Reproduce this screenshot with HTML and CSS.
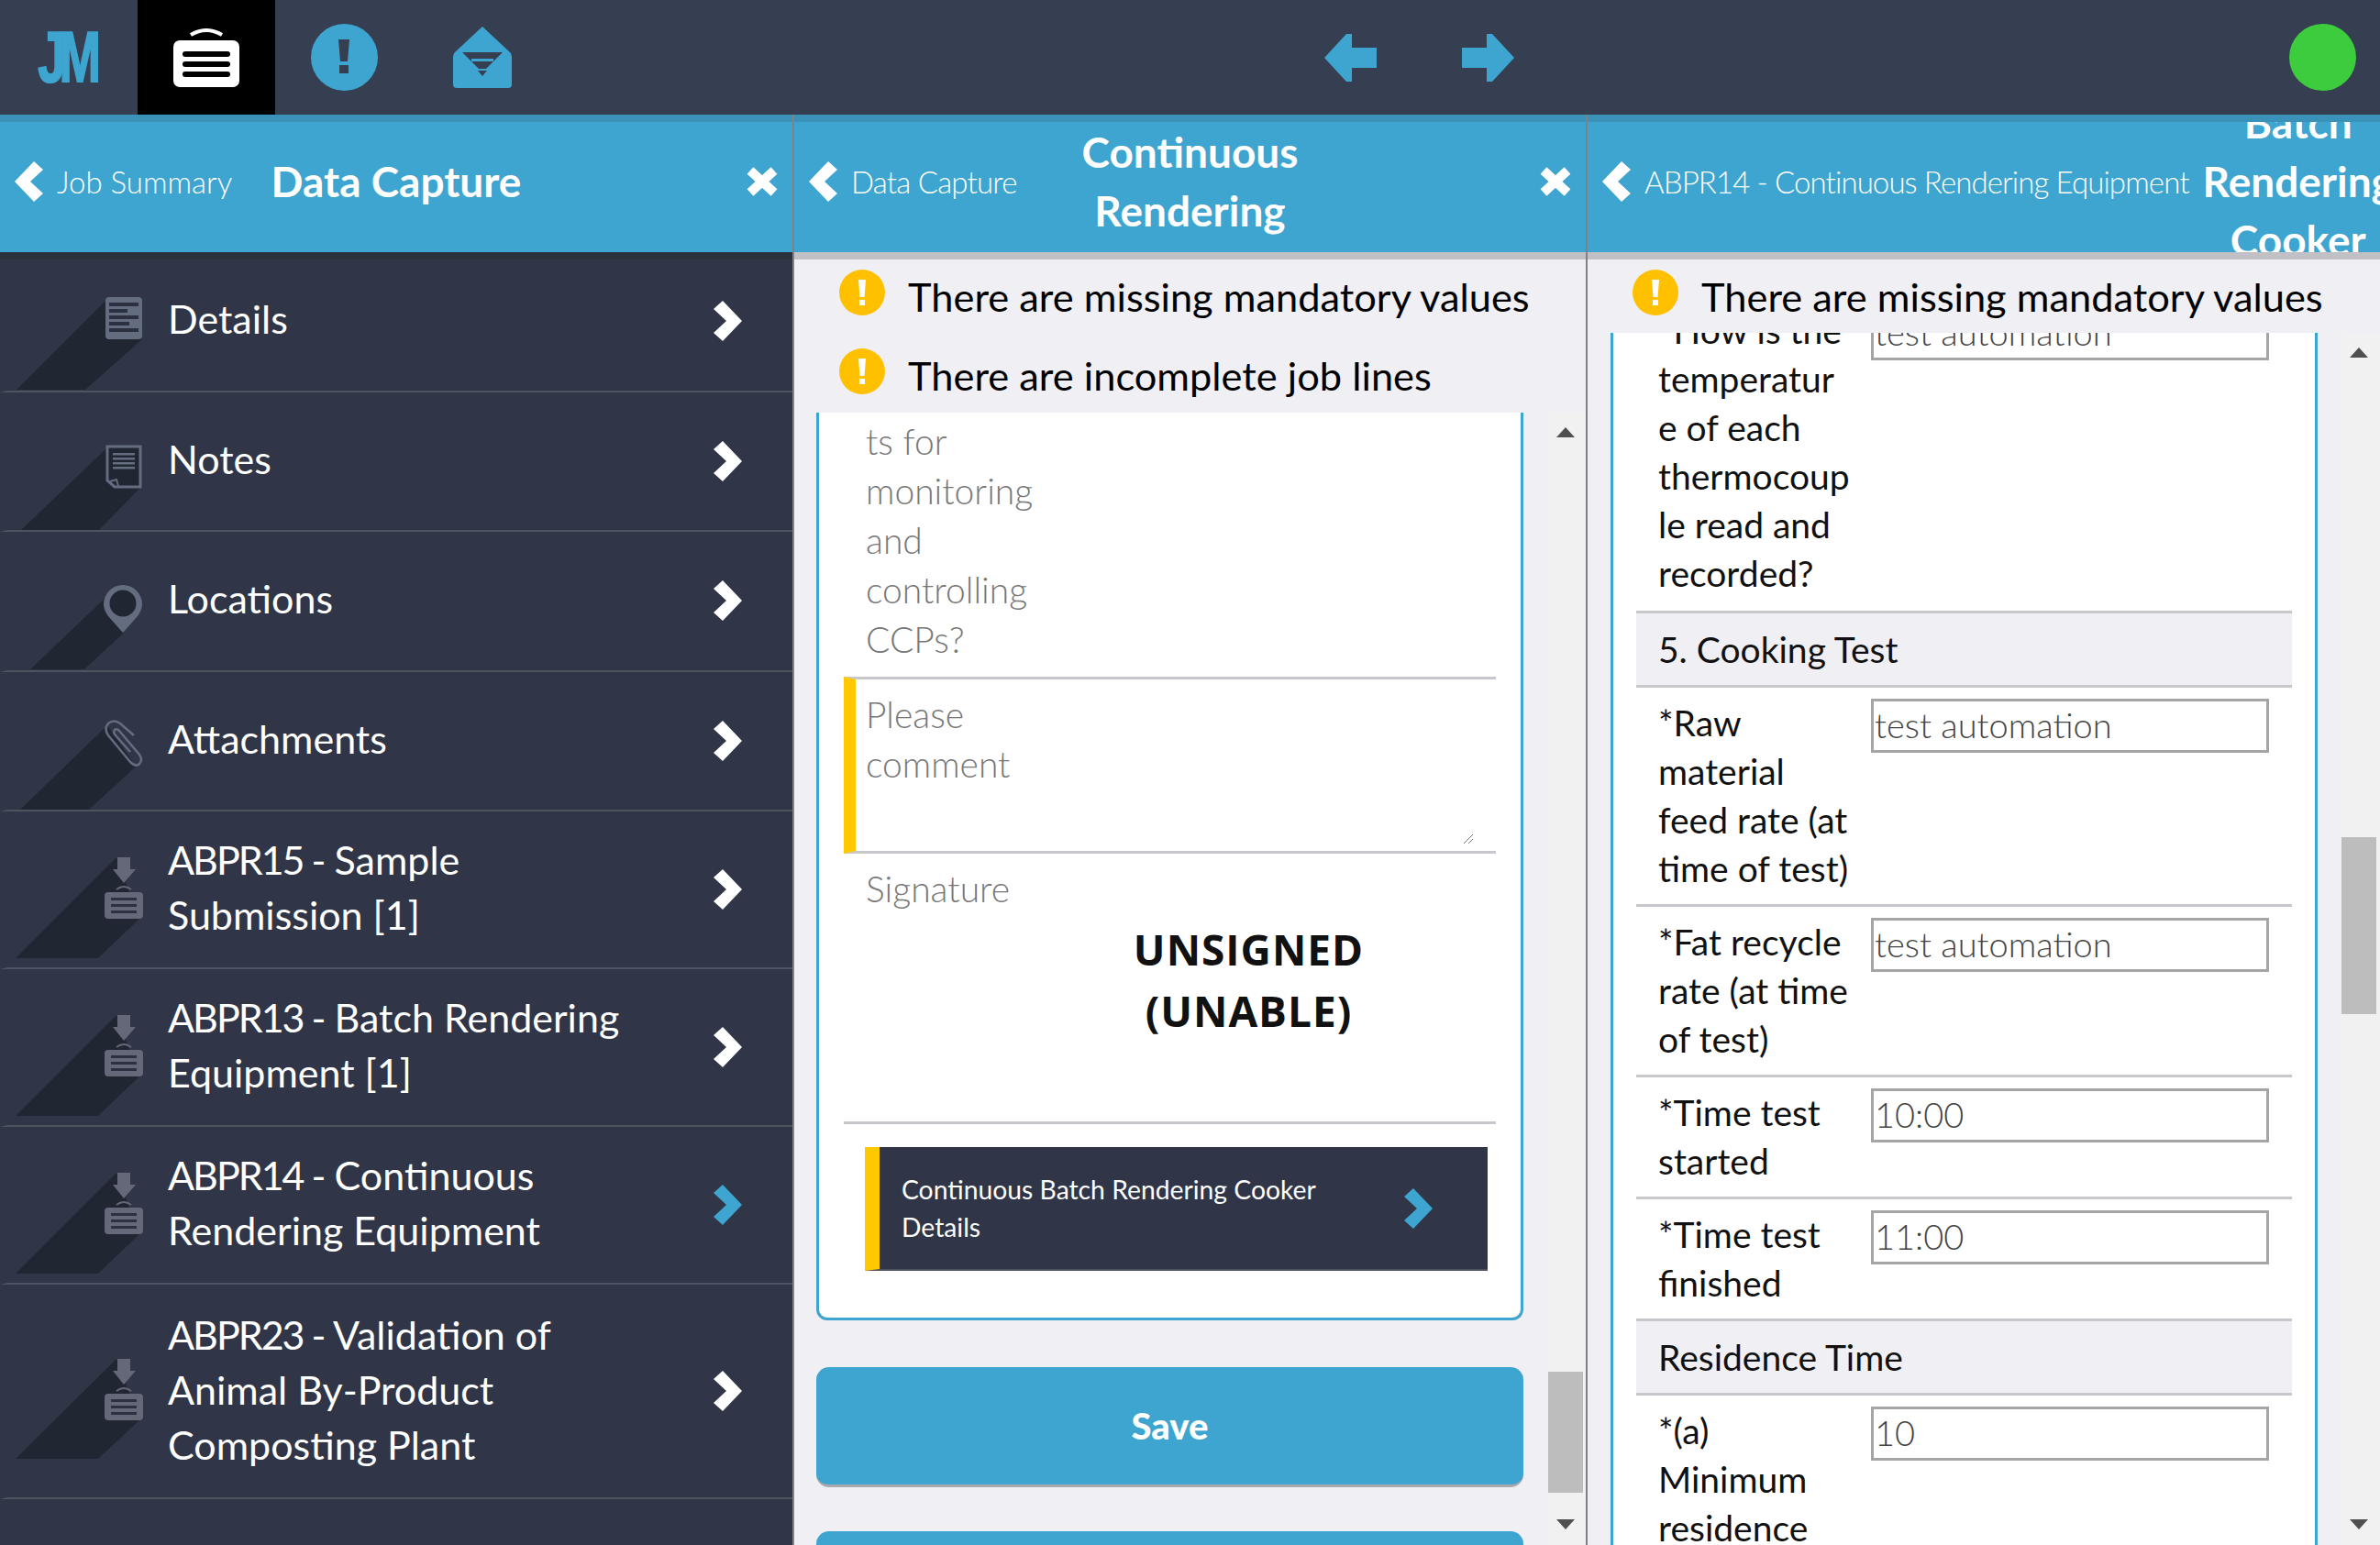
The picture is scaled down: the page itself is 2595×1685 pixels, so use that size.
FILE: index.html
```html
<!DOCTYPE html>
<html lang="en">
<head>
    <meta charset="UTF-8">
    <title>Data Capture</title>
    <link rel="stylesheet" href="styles.css">
</head>
<body>
    <!-- shared icons -->
    <svg class="sprite">
        <symbol id="chev-left" viewBox="0 0 31 44"><polygon points="0,22 21,0 31,9 17,22 31,35 21,44"/></symbol>
        <symbol id="chev-right" viewBox="0 0 31 44"><polygon points="31,22 10,0 0,9 14,22 0,35 10,44"/></symbol>
        <symbol id="close" viewBox="0 0 38 34"><path d="M6 5 L32 29 M32 5 L6 29" stroke="#fff" stroke-width="10" fill="none"/></symbol>
        <symbol id="warn" viewBox="0 0 50 50">
            <circle cx="25" cy="25" r="25" fill="#ffc000"/>
            <polygon points="21,11 29,11 27.5,30 22.5,30" fill="#fff"/>
            <rect x="22" y="33" width="6" height="6" fill="#fff"/>
        </symbol>
        <symbol id="job-dl" viewBox="110 45 50 75">
            <polygon points="128,50 142,50 142,63 148,63 135,78 123,63 128,63" fill="#646878"/>
            <path d="M127 85 Q135 79 143 85" stroke="#646878" stroke-width="2" fill="none"/>
            <rect x="114" y="88" width="42" height="29" rx="4" fill="#646878"/>
            <rect x="121" y="94" width="28" height="3" fill="#2b3140"/>
            <rect x="121" y="101" width="28" height="3" fill="#2b3140"/>
            <rect x="121" y="108" width="28" height="3" fill="#2b3140"/>
        </symbol>
    </svg>

    <header class="topbar">
        <div class="top-btn"><span class="top-logo">JM</span></div>
        <div class="top-btn top-active">
            <svg width="72" height="64" viewBox="0 0 72 64">
                <path d="M19 7 Q36 -3 53 7" stroke="#fff" stroke-width="4" fill="none"/>
                <rect x="0" y="13" width="72" height="51" rx="7" fill="#fff"/>
                <rect x="10" y="25" width="52" height="6" rx="3" fill="#000"/>
                <rect x="10" y="36" width="52" height="6" rx="3" fill="#000"/>
                <rect x="10" y="47" width="52" height="6" rx="3" fill="#000"/>
            </svg>
        </div>
        <div class="top-btn">
            <svg width="73" height="73" viewBox="0 0 73 73">
                <circle cx="36.5" cy="36.5" r="36.5" fill="#3ea5d0"/>
                <polygon points="30,17 42,17 40,41 32,41" fill="#363f52"/>
                <rect x="31" y="45" width="10" height="9" fill="#363f52"/>
            </svg>
        </div>
        <div class="top-btn">
            <svg class="top-mail" width="64" height="67" viewBox="0 0 64 67">
                <path d="M32 0 L62 28 Q64 30 64 33 V63 Q64 67 60 67 H4 Q0 67 0 63 V33 Q0 30 2 28 Z" fill="#3ea5d0"/>
                <path d="M10 28 H54 L36 46 H28 Z" fill="#363f52"/>
                <rect x="20" y="35" width="24" height="3" fill="#3ea5d0"/>
                <polygon points="27,48 37,48 32,54" fill="#363f52"/>
            </svg>
        </div>
        <div class="top-btn top-prev">
            <svg width="57" height="52" viewBox="0 0 57 52"><path d="M0 26 L24 0 H30 V15 H57 V37 H30 V52 H24 Z" fill="#3ea5d0"/></svg>
        </div>
        <div class="top-btn">
            <svg width="57" height="52" viewBox="0 0 57 52"><path d="M57 26 L33 0 H27 V15 H0 V37 H27 V52 H33 Z" fill="#3ea5d0"/></svg>
        </div>
        <div class="status-dot"></div>
    </header>

    <main class="panels">
        <!-- job menu -->
        <section class="panel panel-menu">
            <div class="nav">
                <div class="nav-back"><svg class="chev"><use href="#chev-left"/></svg><span>Job Summary</span></div>
                <div class="nav-title">Data Capture</div>
                <svg class="nav-close"><use href="#close"/></svg>
            </div>
            <ul class="menu">
                <li class="menu-row">
                    <svg class="menu-art" viewBox="8 0 175 150">
                        <polygon class="cast" points="115,53 18,150 93,150 155,95"/>
                        <rect class="ico" x="115" y="49" width="40" height="46" rx="4"/>
                        <g class="ico-cut">
                            <rect x="119" y="55" width="32" height="4"/><rect x="119" y="62" width="20" height="4"/>
                            <rect x="119" y="69" width="32" height="4"/><rect x="119" y="76" width="22" height="4"/>
                            <rect x="119" y="83" width="32" height="4"/>
                        </g>
                    </svg>
                    <span class="menu-label">Details</span>
                    <svg class="menu-chev"><use href="#chev-right"/></svg>
                </li>
                <li class="menu-row">
                    <svg class="menu-art" viewBox="8 0 175 150">
                        <polygon class="cast" points="115,62 23,150 108,150 152,105"/>
                        <path d="M117 59 H153 V103 H125 L117 96 Z" fill="#202632" stroke="#646c80" stroke-width="3"/>
                        <path d="M120 97 L127 95 L129 102" fill="none" stroke="#646c80" stroke-width="2"/>
                        <g class="ico"><rect x="123" y="66" width="24" height="2.5"/><rect x="123" y="71" width="24" height="2.5"/><rect x="123" y="76" width="24" height="2.5"/><rect x="123" y="81" width="24" height="2.5"/></g>
                    </svg>
                    <span class="menu-label">Notes</span>
                    <svg class="menu-chev"><use href="#chev-right"/></svg>
                </li>
                <li class="menu-row">
                    <svg class="menu-art" viewBox="8 0 175 150">
                        <polygon class="cast" points="117,70 33,150 92,150 135,110"/>
                        <path class="ico" d="M134 110 L118 92 Q113 85 113 79 A21 21 0 0 1 155 79 Q155 85 150 92 Z"/>
                        <circle cx="134" cy="78" r="14.5" fill="#202632"/>
                    </svg>
                    <span class="menu-label">Locations</span>
                    <svg class="menu-chev"><use href="#chev-right"/></svg>
                </li>
                <li class="menu-row">
                    <svg class="menu-art" viewBox="8 0 175 150">
                        <polygon class="cast" points="117,58 22,150 97,150 148,103"/>
                        <path d="M146 69 L131 56 Q124 51 118 56 Q113 62 118 69 L142 98 Q148 104 152 100 Q156 96 152 90 L130 64 Q127 61 125 63 Q123 66 126 69 L142 87" fill="none" stroke="#646c80" stroke-width="2.5"/>
                    </svg>
                    <span class="menu-label">Attachments</span>
                    <svg class="menu-chev"><use href="#chev-right"/></svg>
                </li>
                <li class="menu-row">
                    <svg class="menu-art" viewBox="8 0 175 170">
                        <polygon class="cast" points="127,50 17,160 107,160 152,117"/>
                        <use href="#job-dl" x="110" y="45" width="50" height="75"/>
                    </svg>
                    <span class="menu-label"><span class="job-code">ABPR15 -</span> Sample<br>Submission [1]</span>
                    <svg class="menu-chev"><use href="#chev-right"/></svg>
                </li>
                <li class="menu-row">
                    <svg class="menu-art" viewBox="8 0 175 170">
                        <polygon class="cast" points="127,50 17,160 107,160 152,117"/>
                        <use href="#job-dl" x="110" y="45" width="50" height="75"/>
                    </svg>
                    <span class="menu-label"><span class="job-code">ABPR13 -</span> Batch Rendering<br>Equipment [1]</span>
                    <svg class="menu-chev"><use href="#chev-right"/></svg>
                </li>
                <li class="menu-row">
                    <svg class="menu-art" viewBox="8 0 175 170">
                        <polygon class="cast" points="127,50 17,160 107,160 152,117"/>
                        <use href="#job-dl" x="110" y="45" width="50" height="75"/>
                    </svg>
                    <span class="menu-label"><span class="job-code">ABPR14 -</span> Continuous<br>Rendering Equipment</span>
                    <svg class="menu-chev menu-chev-on"><use href="#chev-right"/></svg>
                </li>
                <li class="menu-row">
                    <svg class="menu-art" viewBox="8 0 175 230">
                        <polygon class="cast" points="127,81 17,190 107,190 152,148"/>
                        <use href="#job-dl" x="110" y="76" width="50" height="75"/>
                    </svg>
                    <span class="menu-label"><span class="job-code">ABPR23 -</span> Validation of<br>Animal By-Product<br>Composting Plant</span>
                    <svg class="menu-chev"><use href="#chev-right"/></svg>
                </li>
            </ul>
        </section>

        <!-- data capture form -->
        <section class="panel panel-form">
            <div class="nav">
                <div class="nav-back"><svg class="chev"><use href="#chev-left"/></svg><span>Data Capture</span></div>
                <div class="nav-title">Continuous<br>Rendering</div>
                <svg class="nav-close"><use href="#close"/></svg>
            </div>
            <div class="alerts">
                <div class="alert"><svg class="alert-icon"><use href="#warn"/></svg>There are missing mandatory values</div>
                <div class="alert"><svg class="alert-icon"><use href="#warn"/></svg>There are incomplete job lines</div>
            </div>
            <div class="scroll">
                <div class="scroll-body">
                    <div class="card">
                        <div class="field-label">ts for<br>monitoring<br>and<br>controlling<br>CCPs?</div>
                        <div class="comment">
                            <div class="comment-text">Please<br>comment</div>
                            <svg class="grip" width="10" height="10" viewBox="0 0 10 10"><path d="M0 10 L10 0 M5 10 L10 5" stroke="#777" stroke-width="1"/></svg>
                        </div>
                        <div class="signature">
                            <div class="field-label">Signature</div>
                            <div class="unsigned">UNSIGNED<br>(UNABLE)</div>
                        </div>
                        <div class="subform">
                            <span class="subform-text">Continuous Batch Rendering Cooker<br>Details</span>
                            <svg class="subform-chev"><use href="#chev-right"/></svg>
                        </div>
                    </div>
                    <div class="save-btn">Save</div>
                    <div class="save-btn save-next"></div>
                </div>
                <div class="scrollbar">
                    <div class="sb-up"></div>
                    <div class="sb-thumb sb-thumb-form"></div>
                    <div class="sb-down"></div>
                </div>
            </div>
        </section>

        <!-- equipment form -->
        <section class="panel panel-equip">
            <div class="nav">
                <div class="nav-back"><svg class="chev"><use href="#chev-left"/></svg><span>ABPR14 - Continuous Rendering Equipment</span></div>
                <div class="nav-title">Batch<br>Rendering<br>Cooker</div>
                <svg class="nav-close"><use href="#close"/></svg>
            </div>
            <div class="alerts">
                <div class="alert"><svg class="alert-icon"><use href="#warn"/></svg>There are missing mandatory values</div>
            </div>
            <div class="scroll">
                <div class="scroll-body">
                    <div class="card card-questions">
                        <div class="q-row">
                            <div class="q-label">*How is the<br>temperatur<br>e of each<br>thermocoup<br>le read and<br>recorded?</div>
                            <div class="q-input">test automation</div>
                        </div>
                        <div class="q-section">5. Cooking Test</div>
                        <div class="q-row">
                            <div class="q-label">*Raw<br>material<br>feed rate (at<br>time of test)</div>
                            <div class="q-input">test automation</div>
                        </div>
                        <div class="q-row">
                            <div class="q-label">*Fat recycle<br>rate (at time<br>of test)</div>
                            <div class="q-input">test automation</div>
                        </div>
                        <div class="q-row">
                            <div class="q-label">*Time test<br>started</div>
                            <div class="q-input">10:00</div>
                        </div>
                        <div class="q-row q-row-last">
                            <div class="q-label">*Time test<br>finished</div>
                            <div class="q-input">11:00</div>
                        </div>
                        <div class="q-section">Residence Time</div>
                        <div class="q-row">
                            <div class="q-label">*(a)<br>Minimum<br>residence</div>
                            <div class="q-input">10</div>
                        </div>
                    </div>
                </div>
                <div class="scrollbar">
                    <div class="sb-up"></div>
                    <div class="sb-thumb sb-thumb-equip"></div>
                    <div class="sb-down"></div>
                </div>
            </div>
        </section>
    </main>
</body>
</html>
```

FILE: styles.css
```css
* {
    box-sizing: border-box;
}
html, body {
    margin: 0;
    padding: 0;
    height: 100%;
    overflow: hidden;
}
body {
    font-family: Lato, "Open Sans", sans-serif;
    background-color: #303647;
    display: flex;
    flex-direction: column;
}
.sprite {
    position: absolute;
    width: 0;
    height: 0;
}

/* top bar */
.topbar {
    flex: none;
    display: flex;
    align-items: center;
    height: 125px;
    background-color: #363f52;
}
.top-btn {
    width: 150px;
    height: 125px;
    flex: none;
    display: flex;
    align-items: center;
    justify-content: center;
}
.top-logo {
    font-family: "Liberation Sans", sans-serif;
    font-weight: 700;
    font-size: 78px;
    letter-spacing: -10px;
    color: #3ea5d0;
    -webkit-text-stroke: 2px #3ea5d0;
    transform: scaleX(0.7);
    margin-right: 6px;
}
.top-active {
    background-color: #000;
}
.top-mail {
    margin-left: 2px;
}
.top-prev {
    margin-left: 797px;
}
.status-dot {
    width: 73px;
    height: 73px;
    margin-left: auto;
    margin-right: 26px;
    border-radius: 50%;
    background-color: #3dcc3d;
}

/* panels */
.panels {
    flex: 1;
    min-height: 0;
    display: grid;
    grid-template-columns: 866px 865px 864px;
}
.panel {
    min-width: 0;
    display: flex;
    flex-direction: column;
    overflow: hidden;
    background-color: #efeff4;
    border-right: 2px solid #7f8187;
}
.panel-menu {
    background-color: #303647;
}
.panel-equip {
    border-right: none;
}

/* header of a panel */
.nav {
    flex: none;
    position: relative;
    z-index: 1;
    height: 150px;
    padding-bottom: 12px;
    display: grid;
    grid-template-columns: 1fr auto 1fr;
    column-gap: 15px;
    align-items: center;
    align-content: center;
    overflow: hidden;
    color: #fff;
    background-color: #3ea5d0;
    border-top: 8px solid #3a92b8;
    box-shadow: 0 8px 0 rgba(0, 0, 0, 0.1);
}
.nav-back {
    display: flex;
    align-items: center;
    padding-left: 16px;
    font-size: 33px;
    font-weight: 300;
    white-space: nowrap;
}
.panel-form .nav-back {
    letter-spacing: -0.8px;
}
.panel-equip .nav-back {
    letter-spacing: -0.9px;
}
.chev {
    width: 31px;
    height: 44px;
    margin-right: 15px;
    fill: #fff;
}
.nav-title {
    font-size: 46px;
    font-weight: 700;
    line-height: 64px;
    text-align: center;
    white-space: nowrap;
}
.nav-close {
    width: 38px;
    height: 34px;
    justify-self: end;
    margin-right: 14px;
}

/* job menu */
.menu {
    list-style: none;
    margin: 0;
    padding: 0;
}
.menu-row {
    display: flex;
    align-items: center;
    min-height: 152.5px;
    border-left: 8px solid #303647;
    border-bottom: 2.5px solid #4d535f;
    color: #fff;
}
.menu-art {
    flex: none;
    align-self: flex-start;
    width: 175px;
    height: auto;
}
.cast {
    fill: #202632;
}
.ico {
    fill: #646c80;
}
.ico-cut {
    fill: #2b3140;
}
.menu-label {
    flex: 1;
    padding: 23px 0 27px;
    font-size: 43px;
    line-height: 60px;
}
.menu-row:last-child .menu-label {
    padding-top: 25px;
}
.job-code {
    letter-spacing: -2px;
}
.menu-chev {
    flex: none;
    width: 31px;
    height: 44px;
    margin-right: 55px;
    fill: #fff;
}
.menu-chev-on {
    fill: #3ea5d0;
}

/* alerts */
.alerts {
    flex: none;
    background-color: #efeff4;
    border-top: 8px solid #d6d6dc;
}
.alert {
    display: flex;
    align-items: center;
    height: 80px;
    padding-left: 49px;
    font-size: 43.4px;
    color: #000;
    white-space: nowrap;
}
.alert + .alert {
    height: 87px;
    padding-top: 4px;
}
.alert-icon {
    flex: none;
    width: 50px;
    height: 50px;
    margin: -8px 25px 0 0;
}

/* scrolling area */
.scroll {
    flex: 1;
    min-height: 0;
    display: flex;
    overflow: hidden;
}
.scroll-body {
    flex: 1;
    min-width: 0;
    padding: 0 27px 0 24px;
}
.card {
    padding: 4px 27px 51px;
    background-color: #fff;
    border: 3px solid #3ea5d0;
    border-top: none;
    border-radius: 0 0 12px 12px;
}
.field-label {
    padding-left: 24px;
    font-size: 39px;
    font-weight: 300;
    line-height: 54px;
    color: #777;
}
.comment {
    position: relative;
    height: 193px;
    margin-top: 14px;
    padding: 11px 0 0 11px;
    border-left: 13px solid #ffc800;
    border-top: 3px solid #c8c7cc;
    border-bottom: 3px solid #c8c7cc;
}
.comment-text {
    font-size: 39px;
    font-weight: 300;
    line-height: 54px;
    color: #777;
}
.grip {
    position: absolute;
    right: 25px;
    bottom: 8px;
}
.signature {
    height: 295px;
    padding-top: 11px;
    border-bottom: 3px solid #c8c7cc;
}
.unsigned {
    margin-top: 6px;
    padding-left: 172px;
    font-family: "Open Sans", sans-serif;
    font-size: 46px;
    font-weight: 700;
    line-height: 67px;
    text-align: center;
    letter-spacing: 1px;
    color: #111;
}
.subform {
    display: flex;
    align-items: center;
    height: 135px;
    margin: 25px 9px 0 23px;
    border-left: 16px solid #ffc800;
    border-bottom: 2px solid #4d535f;
    background-color: #303647;
    color: #fff;
}
.subform-text {
    flex: 1;
    padding-left: 24px;
    font-size: 28.3px;
    line-height: 41px;
}
.subform-chev {
    flex: none;
    width: 31px;
    height: 44px;
    margin-right: 60px;
    fill: #3ea5d0;
}
.save-btn {
    height: 131px;
    margin-top: 51px;
    border-radius: 14px;
    background-color: #3ea5d0;
    border-bottom: 3px solid #a9a9ae;
    text-align: center;
    font-size: 40px;
    font-weight: 900;
    line-height: 128px;
    color: #fff;
}
.save-next {
    margin-top: 48px;
}

/* scrollbars */
.scrollbar {
    position: relative;
    flex: none;
    width: 41px;
    background-color: #f1f1f1;
}
.sb-thumb {
    position: absolute;
    left: 0;
    width: 38px;
    background-color: #bdbdbd;
}
.sb-thumb-form {
    top: 1046px;
    height: 132px;
}
.sb-thumb-equip {
    top: 550px;
    height: 193px;
}
.sb-up, .sb-down {
    position: absolute;
    left: 9px;
    width: 0;
    height: 0;
    border-left: 10px solid transparent;
    border-right: 10px solid transparent;
}
.sb-up {
    top: 16px;
    border-bottom: 11px solid #505050;
}
.sb-down {
    bottom: 17px;
    border-top: 11px solid #505050;
}

/* equipment form */
.panel-equip .scroll-body {
    padding-left: 25px;
    padding-right: 26px;
}
.panel-equip .scrollbar {
    width: 42px;
}
.card-questions {
    margin-top: -29px;
    padding: 0 25px;
    border-radius: 0;
    border-bottom: none;
}
.q-row {
    display: flex;
    align-items: flex-start;
    padding: 12px 25px 12px 24px;
    border-bottom: 3px solid #c8c7cc;
}
.q-row:first-child {
    border-bottom: none;
    padding-top: 0;
    padding-bottom: 14px;
}
.q-row-last {
    border-bottom: none;
}
.q-label {
    flex: none;
    width: 232px;
    font-size: 39px;
    line-height: 53px;
    color: #111;
    white-space: nowrap;
}
.q-input {
    flex: 1;
    height: 59px;
    padding-left: 1px;
    border: 3px solid #a5a5a5;
    font-size: 38px;
    font-weight: 300;
    line-height: 50px;
    color: #444;
    background-color: #fff;
}
.q-section {
    height: 84px;
    padding-left: 24px;
    border-top: 3px solid #c8c7cc;
    border-bottom: 3px solid #c8c7cc;
    background-color: #efeff4;
    font-size: 39px;
    line-height: 78px;
    color: #111;
}
```
